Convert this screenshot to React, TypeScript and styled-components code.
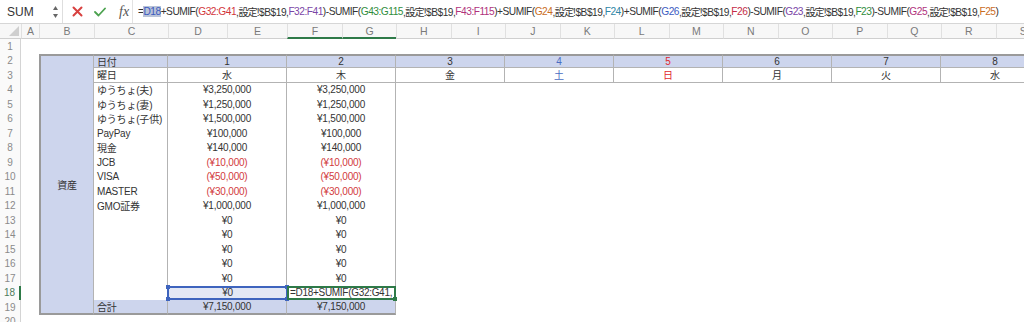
import React from 'react';
import styled, { createGlobalStyle, css } from 'styled-components';

const BLUE_FILL = '#cdd5ed';
const INNER = '#b3b3b3';
const OUTER = '#9a9a9a';
const TEXT = '#333333';
const NEG = '#d23a40';
const FONT = `"Liberation Sans", "Noto Sans CJK JP", sans-serif`;

const GlobalStyle = createGlobalStyle`
  html, body { margin: 0; padding: 0; background: #ffffff; }
  body { font-family: ${FONT}; }
  #root { width: 1024px; height: 322px; overflow: hidden; }
`;

const Page = styled.div`
  width: 1024px;
  height: 322px;
  overflow: hidden;
  background: #fff;
`;

/* ---------------- formula bar ---------------- */
const FormulaBar = styled.div`
  display: flex;
  align-items: stretch;
  height: 24px;
  box-sizing: border-box;
  border-bottom: 1px solid #d6d6d6;
  background: #fff;
`;

const NameBox = styled.div`
  width: 63px;
  box-sizing: border-box;
  display: flex;
  align-items: center;
  justify-content: space-between;
  padding: 0 3px 0 7px;
  font-size: 12px;
  color: ${TEXT};
  border-right: 1px solid #dedede;
`;

const Controls = styled.div`
  display: flex;
  align-items: center;
  gap: 11px;
  padding: 0 0 0 9px;
  width: 69px;
  box-sizing: border-box;
`;

const Fx = styled.span`
  font-family: "Liberation Serif", serif;
  font-style: italic;
  font-size: 14px;
  color: #555;
  margin-left: 2px;
`;

const FormulaInput = styled.div`
  flex: 1;
  display: flex;
  align-items: center;
  padding-left: 5px;
  border-left: 1px solid #e2e2e2;
  white-space: nowrap;
  overflow: hidden;
  font-size: 10.2px;
  letter-spacing: -0.5px;
  color: ${TEXT};
`;

const Ref = styled.span<{ $c: string; $hl?: boolean }>`
  color: ${(p) => p.$c};
  ${(p) =>
    p.$hl &&
    css`
      background: #b9c3d8;
    `}
`;

const Kanji = styled.span`
  letter-spacing: -1px;
`;

/* ---------------- sheet grid ---------------- */
const Sheet = styled.div`
  display: grid;
  grid-template-columns: 21px 18px 55px 74px 59px 60px 55px 54px repeat(12, 54.5px);
  grid-template-rows: 15px repeat(20, 14.5px);
  width: 1024px;
  overflow: hidden;
  font-family: ${FONT};
  font-size: 10px;
  color: ${TEXT};
`;

const Corner = styled.div`
  grid-column: 1 / span 2;
  grid-row: 1;
  display: flex;
  align-items: flex-end;
  padding: 0 0 2px 9px;
  box-sizing: border-box;
  background: #f7f7f7;
  border-bottom: 1px solid #cfcfcf;
`;

const ColHead = styled.div<{ $c: number; $sel?: boolean }>`
  grid-column: ${(p) => p.$c};
  grid-row: 1;
  display: flex;
  align-items: center;
  justify-content: center;
  background: #f7f7f7;
  color: #7a7a7a;
  font-size: 10.5px;
  box-sizing: border-box;
  border-left: 1px solid #e0e0e0;
  border-bottom: ${(p) => (p.$sel ? '2px solid #2e7a48' : '1px solid #cfcfcf')};
`;

const RowHead = styled.div<{ $r: number; $sel?: boolean }>`
  grid-column: 1;
  grid-row: ${(p) => p.$r};
  display: flex;
  align-items: center;
  justify-content: center;
  color: ${(p) => (p.$sel ? '#4d7a5c' : '#8a8a8a')};
  font-size: 10px;
  background: #fafafa;
  box-sizing: border-box;
  border-right: ${(p) => (p.$sel ? '2px solid #2e7a48' : '1px solid #d4d4d4')};
`;

type CellProps = {
  $c: number;
  $cs?: number;
  $r: number;
  $rs?: number;
  $fill?: boolean;
  $align?: 'left' | 'center';
  $color?: string;
  $top?: string;
  $bottom?: string;
  $left?: string;
  $right?: string;
};

const Cell = styled.div<CellProps>`
  grid-column: ${(p) => `${p.$c} / span ${p.$cs ?? 1}`};
  grid-row: ${(p) => `${p.$r} / span ${p.$rs ?? 1}`};
  display: flex;
  align-items: center;
  justify-content: ${(p) => (p.$align === 'left' ? 'flex-start' : 'center')};
  padding: ${(p) => (p.$align === 'left' ? '0 0 0 3px' : '0')};
  box-sizing: border-box;
  background: ${(p) => (p.$fill ? BLUE_FILL : '#fff')};
  color: ${(p) => p.$color ?? TEXT};
  white-space: nowrap;
  overflow: hidden;
  letter-spacing: -0.2px;
  border-top: ${(p) => p.$top ?? 'none'};
  border-bottom: ${(p) => p.$bottom ?? 'none'};
  border-left: ${(p) => p.$left ?? 'none'};
  border-right: ${(p) => p.$right ?? 'none'};
`;

const RefCell = styled.div`
  grid-column: 5 / span 2;
  grid-row: 19;
  position: relative;
  display: flex;
  align-items: center;
  justify-content: center;
  background: #e3e8f5;
  border: 2px solid #3e64be;
  box-sizing: border-box;
  margin: 0 -1px 0 -1px;
  letter-spacing: -0.2px;
`;

const ActiveCell = styled.div`
  grid-column: 7 / span 2;
  grid-row: 19;
  position: relative;
  display: flex;
  align-items: center;
  padding-left: 1px;
  background: #fff;
  border: 2px solid #2e7a48;
  box-sizing: border-box;
  white-space: nowrap;
  font-size: 10px;
  letter-spacing: -0.3px;
`;

const Clip = styled.span`
  display: block;
  overflow: hidden;
  width: 100%;
`;

const Handle = styled.span<{ $pos: 'tl' | 'tr' | 'bl' | 'br'; $col: string }>`
  position: absolute;
  width: 4px;
  height: 4px;
  background: ${(p) => p.$col};
  ${(p) => (p.$pos[0] === 't' ? 'top: -3px;' : 'bottom: -3px;')}
  ${(p) => (p.$pos[1] === 'l' ? 'left: -3px;' : 'right: -3px;')}
`;

/* ---------------- icons ---------------- */
const Spinner = () => (
  <svg width="7" height="14" viewBox="0 0 7 14">
    <path d="M3.5 1 L6 5 L1 5 Z" fill="#666" />
    <path d="M3.5 13 L6 9 L1 9 Z" fill="#666" />
  </svg>
);

const CancelIcon = () => (
  <svg width="11" height="11" viewBox="0 0 11 11">
    <path d="M1.5 1.5 L9.5 9.5 M9.5 1.5 L1.5 9.5" stroke="#d8403f" strokeWidth="2" strokeLinecap="round" />
  </svg>
);

const EnterIcon = () => (
  <svg width="12" height="10" viewBox="0 0 12 10">
    <path d="M1 5 L4.5 8.5 L11 1.5" stroke="#4ca24f" strokeWidth="1.8" fill="none" strokeLinecap="round" strokeLinejoin="round" />
  </svg>
);

const SelectAll = () => (
  <svg width="10" height="10" viewBox="0 0 10 10">
    <path d="M10 0 L10 10 L0 10 Z" fill="#cfcfcf" />
  </svg>
);

/* ---------------- data ---------------- */
const formula: { t: string; c?: string; hl?: boolean }[] = [
  { t: '=' },
  { t: 'D18', c: '#3b5bbf', hl: true },
  { t: '+SUMIF(' },
  { t: 'G32:G41', c: '#d2353a' },
  { t: ',', k: true } as any,
  { t: 'F32:F41', c: '#7b45a6' },
  { t: ')-SUMIF(' },
  { t: 'G43:G115', c: '#2f8d3c' },
  { t: ',', k: true } as any,
  { t: 'F43:F115', c: '#b0327c' },
  { t: ')+SUMIF(' },
  { t: 'G24', c: '#c96d1e' },
  { t: ',', k: true } as any,
  { t: 'F24', c: '#2f86a6' },
  { t: ')+SUMIF(' },
  { t: 'G26', c: '#3b5bbf' },
  { t: ',', k: true } as any,
  { t: 'F26', c: '#c42c48' },
  { t: ')-SUMIF(' },
  { t: 'G23', c: '#7b45a6' },
  { t: ',', k: true } as any,
  { t: 'F23', c: '#2f8d3c' },
  { t: ')-SUMIF(' },
  { t: 'G25', c: '#b0327c' },
  { t: ',', k: true } as any,
  { t: 'F25', c: '#c96d1e' },
  { t: ')' },
];

const letters = ['A', 'B', 'C', 'D', 'E', 'F', 'G', 'H', 'I', 'J', 'K', 'L', 'M', 'N', 'O', 'P', 'Q', 'R', 'S'];

const days = [
  { n: '1', d: '水' },
  { n: '2', d: '木' },
  { n: '3', d: '金' },
  { n: '4', d: '土', c: '#4a6cc2' },
  { n: '5', d: '日', c: '#e0282d' },
  { n: '6', d: '月' },
  { n: '7', d: '火' },
  { n: '8', d: '水' },
];

const items: { label: string; v: string; neg?: boolean }[] = [
  { label: 'ゆうちょ(夫)', v: '¥3,250,000' },
  { label: 'ゆうちょ(妻)', v: '¥1,250,000' },
  { label: 'ゆうちょ(子供)', v: '¥1,500,000' },
  { label: 'PayPay', v: '¥100,000' },
  { label: '現金', v: '¥140,000' },
  { label: 'JCB', v: '(¥10,000)', neg: true },
  { label: 'VISA', v: '(¥50,000)', neg: true },
  { label: 'MASTER', v: '(¥30,000)', neg: true },
  { label: 'GMO証券', v: '¥1,000,000' },
  { label: '', v: '¥0' },
  { label: '', v: '¥0' },
  { label: '', v: '¥0' },
  { label: '', v: '¥0' },
  { label: '', v: '¥0' },
];

const inner = `1px solid ${INNER}`;
const outer = `2px solid ${OUTER}`;

const Criterion = () => (
  <span>
    ,<Kanji>設定</Kanji>!$B$19,
  </span>
);

export default function App() {
  return (
    <Page>
      <GlobalStyle />
      <FormulaBar>
        <NameBox>
          <span>SUM</span>
          <Spinner />
        </NameBox>
        <Controls>
          <CancelIcon />
          <EnterIcon />
          <Fx>fx</Fx>
        </Controls>
        <FormulaInput>
          {formula.map((s: any, i) =>
            s.k ? (
              <Criterion key={i} />
            ) : s.c ? (
              <Ref key={i} $c={s.c} $hl={s.hl}>
                {s.t}
              </Ref>
            ) : (
              <span key={i}>{s.t}</span>
            )
          )}
        </FormulaInput>
      </FormulaBar>

      <Sheet>
        <Corner>
          <SelectAll />
        </Corner>
        {letters.map((l, i) => (
          <ColHead key={l} $c={i + 2} $sel={l === 'F' || l === 'G'}>
            {l}
          </ColHead>
        ))}
        {Array.from({ length: 20 }, (_, i) => (
          <RowHead key={i} $r={i + 2} $sel={i + 1 === 18}>
            {i + 1}
          </RowHead>
        ))}

        {/* B2:B19 group */}
        <Cell $c={3} $r={3} $rs={18} $fill $top={outer} $left={outer} $bottom={outer} $right={inner}>
          資産
        </Cell>

        {/* Row 2 */}
        <Cell $c={4} $r={3} $fill $align="left" $top={outer} $right={inner} $bottom={inner}>
          日付
        </Cell>
        {days.map((d, i) => (
          <Cell key={`n${i}`} $c={5 + i * 2} $cs={2} $r={3} $fill $color={d.c} $top={outer} $right={inner} $bottom={inner}>
            {d.n}
          </Cell>
        ))}

        {/* Row 3 */}
        <Cell $c={4} $r={4} $align="left" $right={inner} $bottom={inner}>
          曜日
        </Cell>
        {days.map((d, i) => (
          <Cell key={`d${i}`} $c={5 + i * 2} $cs={2} $r={4} $color={d.c} $right={inner} $bottom={inner}>
            {d.d}
          </Cell>
        ))}

        {/* Rows 4-17 */}
        {items.map((it, i) => (
          <React.Fragment key={`r${i}`}>
            <Cell $c={4} $r={5 + i} $align="left" $right={inner}>
              {it.label}
            </Cell>
            <Cell $c={5} $cs={2} $r={5 + i} $right={inner} $color={it.neg ? NEG : undefined}>
              {it.v}
            </Cell>
            <Cell $c={7} $cs={2} $r={5 + i} $right={inner} $color={it.neg ? NEG : undefined}>
              {it.v}
            </Cell>
          </React.Fragment>
        ))}

        {/* Row 18 */}
        <Cell $c={4} $r={19} $right={inner} />
        <RefCell>
          ¥0
          <Handle $pos="tl" $col="#3e64be" />
          <Handle $pos="tr" $col="#3e64be" />
          <Handle $pos="bl" $col="#3e64be" />
          <Handle $pos="br" $col="#3e64be" />
        </RefCell>
        <ActiveCell>
          <Clip>=D18+SUMIF(G32:G41,</Clip>
          <Handle $pos="br" $col="#2e7a48" />
        </ActiveCell>

        {/* Row 19 */}
        <Cell $c={4} $r={20} $fill $align="left" $right={inner} $bottom={outer}>
          合計
        </Cell>
        <Cell $c={5} $cs={2} $r={20} $fill $right={inner} $bottom={outer}>
          ¥7,150,000
        </Cell>
        <Cell $c={7} $cs={2} $r={20} $fill $right={inner} $bottom={outer}>
          ¥7,150,000
        </Cell>
      </Sheet>
    </Page>
  );
}
